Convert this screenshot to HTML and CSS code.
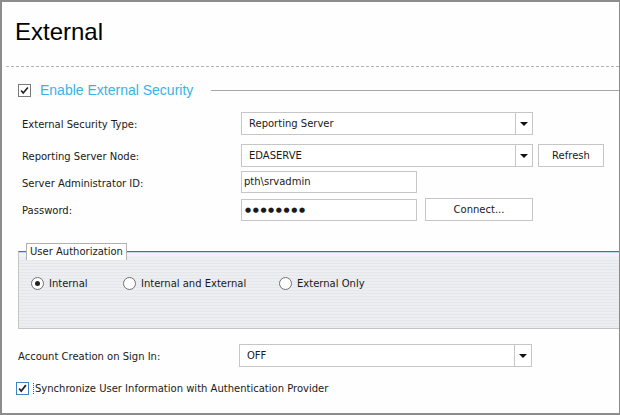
FILE: index.html
```html
<!DOCTYPE html>
<html lang="en">
  <head>
    <meta charset="UTF-8" />
    <title>External</title>
    <link rel="stylesheet" href="styles.css">
  </head>
  <body>
    <div class="window">
      <h1 class="page-title">External</h1>
      <div class="dotted-rule"></div>

      <div class="section-head">
        <span class="check"><svg viewBox="0 0 13 13"><path d="M2.5 6.5l2.5 3 5.5-6.5" /></svg></span>
        <span class="section-title">Enable External Security</span>
        <span class="section-line"></span>
      </div>

      <div class="form">
        <div class="form-row row-type">
          <label class="field-label">External Security Type:</label>
          <div class="select select-wide">
            <span class="select-value">Reporting Server</span>
            <span class="select-arrow"></span>
          </div>
        </div>
        <div class="form-row row-node">
          <label class="field-label">Reporting Server Node:</label>
          <div class="select select-wide">
            <span class="select-value">EDASERVE</span>
            <span class="select-arrow"></span>
          </div>
          <button class="btn btn-refresh">Refresh</button>
        </div>
        <div class="form-row row-admin">
          <label class="field-label">Server Administrator ID:</label>
          <div class="text-input">pth\srvadmin</div>
        </div>
        <div class="form-row row-password">
          <label class="field-label">Password:</label>
          <div class="text-input password">&#9679;&#9679;&#9679;&#9679;&#9679;&#9679;&#9679;&#9679;</div>
          <button class="btn btn-connect">Connect...</button>
        </div>
      </div>

      <fieldset class="auth">
        <legend class="auth-legend">User Authorization</legend>
        <div class="radios">
          <span class="radio-item item-internal"><span class="radio checked"></span>Internal</span>
          <span class="radio-item item-both"><span class="radio"></span>Internal and External</span>
          <span class="radio-item"><span class="radio"></span>External Only</span>
        </div>
      </fieldset>

      <div class="form-row row-account">
        <label class="field-label account-label">Account Creation on Sign In:</label>
        <div class="select select-account">
          <span class="select-value">OFF</span>
          <span class="select-arrow"></span>
        </div>
      </div>

      <div class="sync">
        <span class="check check-focus"><svg viewBox="0 0 13 13"><path d="M2.5 6.5l2.5 3 5.5-7" /></svg></span>
        <span class="sync-label">Synchronize User Information with Authentication Provider</span>
      </div>
    </div>
  </body>
</html>
```

FILE: styles.css
```css
* {
  margin: 0;
  padding: 0;
  box-sizing: border-box;
}
body {
  font-family: "DejaVu Sans", Verdana, sans-serif;
  font-size: 10px;
  color: #1a1a1a;
  background: #ffffff;
}
.window {
  width: 620px;
  height: 415px;
  border: 2px solid #8c8c8c;
  border-right-width: 1px;
  background: #fdfefd;
  overflow: hidden;
}
.page-title {
  font-family: "Liberation Sans", Arial, sans-serif;
  font-size: 24px;
  font-weight: 400;
  line-height: 28px;
  color: #000;
  margin: 16px 0 0 13px;
}
.dotted-rule {
  border-top: 1px dashed #b4b4b4;
  margin: 20px 0 0 4px;
}
.section-head {
  display: flex;
  align-items: center;
  margin: 15px 0 0 16px;
  height: 16px;
}
.check {
  width: 13px;
  height: 13px;
  border: 1px solid #7a7a7a;
  background: #fff;
  display: inline-flex;
  flex-shrink: 0;
}
.check svg {
  width: 11px;
  height: 11px;
  fill: none;
  stroke: #222;
  stroke-width: 2;
}
.section-title {
  font-family: "Liberation Sans", Arial, sans-serif;
  font-size: 14px;
  color: #3bb2e6;
  margin-left: 9px;
}
.section-line {
  flex: 1;
  border-top: 1px solid #a6a6a6;
  margin-left: 18px;
}
.form {
  margin: 14px 0 0 20px;
}
.form-row {
  display: flex;
  align-items: center;
}
.field-label {
  width: 219px;
  flex-shrink: 0;
  padding-top: 2px;
}
.row-node {
  margin-top: 9px;
}
.row-admin {
  margin-top: 4px;
}
.row-password {
  margin-top: 5px;
}
.select {
  height: 23px;
  border: 1px solid #c6c6c6;
  background: #fff;
  display: flex;
  align-items: center;
}
.select-wide {
  width: 292px;
}
.select-value {
  flex: 1;
  padding-left: 7px;
}
.select-arrow {
  width: 17px;
  height: 21px;
  border-left: 1px solid #c6c6c6;
  position: relative;
}
.select-arrow::after {
  content: "";
  position: absolute;
  left: 4px;
  top: 9px;
  border-left: 4px solid transparent;
  border-right: 4px solid transparent;
  border-top: 4px solid #111;
}
.text-input {
  width: 176px;
  height: 22px;
  border: 1px solid #c6c6c6;
  background: #fff;
  padding: 4px 0 0 2px;
}
.password {
  font-size: 7px;
  letter-spacing: 1.6px;
  padding: 6px 0 0 3px;
}
.btn {
  font-family: inherit;
  font-size: 10px;
  color: #1a1a1a;
  background: #fff;
  border: 1px solid #c6c6c6;
  height: 23px;
}
.btn-refresh {
  width: 66px;
  margin-left: 5px;
}
.btn-connect {
  width: 108px;
  margin-left: 8px;
}
.auth {
  margin: 22px 0 0 16px;
  height: 86px;
  border: 1px solid #c4c4c4;
  border-top: 1px solid #4a70a6;
  border-right: none;
  box-shadow: inset 0 1px 0 #c3d3ea;
  background:
    linear-gradient(to bottom, #f3f7fc 0, rgba(240, 244, 250, 0) 8px),
    repeating-linear-gradient(to bottom, #eceef1 0, #eceef1 2px, #e4e6ea 2px, #e4e6ea 3px);
}
.auth-legend {
  margin-left: 7px;
  padding: 1px 3px 1px;
  border: 1px solid #b0b0b0;
  border-bottom: none;
  background: #fff;
  line-height: 14px;
}
.radios {
  display: flex;
  align-items: center;
  margin: 17px 0 0 12px;
}
.radio-item {
  display: inline-flex;
  align-items: center;
}
.item-internal {
  width: 92px;
}
.item-both {
  width: 156px;
}
.radio {
  width: 13px;
  height: 13px;
  border: 1px solid #707070;
  border-radius: 50%;
  background: #fff;
  margin-right: 5px;
  position: relative;
}
.radio.checked::after {
  content: "";
  position: absolute;
  left: 3px;
  top: 3px;
  width: 5px;
  height: 5px;
  border-radius: 50%;
  background: #222;
}
.row-account {
  margin: 15px 0 0 16px;
}
.account-label {
  width: 221px;
}
.select-account {
  width: 293px;
}
.sync {
  display: flex;
  align-items: center;
  margin: 15px 0 0 14px;
}
.check-focus {
  border-color: #3c82c4;
}
.sync-label {
  margin-left: 4px;
  padding-left: 1px;
  border-left: 1px dotted #555;
}
```
